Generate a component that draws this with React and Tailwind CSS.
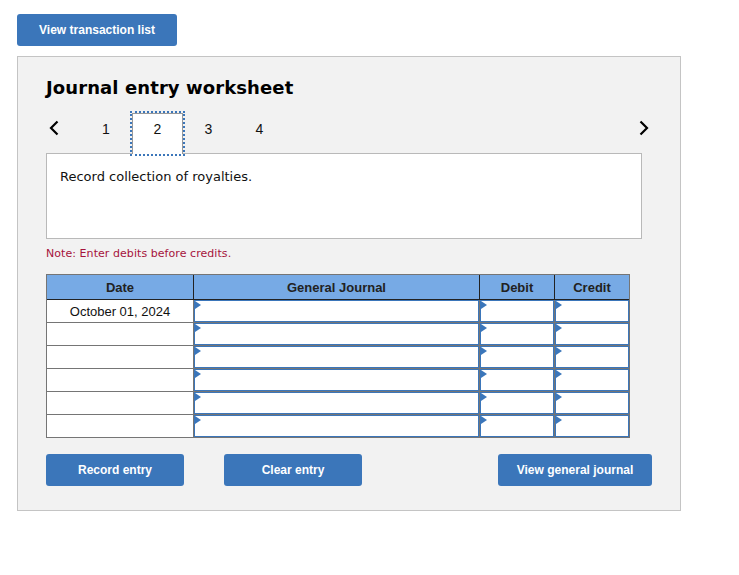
import React from 'react';

const arial = "font-['Liberation_Sans',Arial,sans-serif]";
const verdana = "font-['DejaVu_Sans',Verdana,sans-serif]";

const rows = ['October 01, 2024', '', '', '', '', ''];

function BlueButton({ label, className }) {
  return (
    <button className={`h-8 rounded-[3px] bg-[#3b76ba] text-xs font-bold text-white ${arial} ${className}`}>
      {label}
    </button>
  );
}

function Cell() {
  return (
    <div className="relative ml-[1px] border border-[#3b76ba] bg-white">
      <span className="absolute left-0 top-0 h-0 w-0 border-y-[4px] border-l-[6px] border-y-transparent border-l-[#3b76ba]" />
    </div>
  );
}

function Chevron({ right }) {
  return (
    <svg width="12" height="16" viewBox="0 0 12 16" fill="none" stroke="#000" strokeWidth="2.2">
      <path d={right ? 'M2.5 1.5L9 8l-6.5 6.5' : 'M9.5 1.5L3 8l6.5 6.5'} />
    </svg>
  );
}

export default function App() {
  return (
    <div className="min-h-[575px] w-[739px] bg-white pl-[17px] pt-[14px]">
      <BlueButton label="View transaction list" className="block w-40" />

      {/* Worksheet panel */}
      <div className="mt-[10px] h-[455px] w-[664px] border border-[#c4c4c4] bg-[#f2f2f2] pl-[28px] pt-[19px]">
        <h2 className={`text-[18px] font-bold leading-[23px] tracking-[0.1px] text-black ${verdana}`}>Journal entry worksheet</h2>

        {/* Pager */}
        <div className="relative z-10 mt-[12px] flex h-[45px] w-[604px] items-start">
          <div className="flex h-[34px] w-[35px] items-center pl-[2px]">
            <Chevron />
          </div>
          <div className={`flex h-[36px] w-[49px] items-center justify-center pl-[1px] text-sm text-[#111] ${arial}`}>1</div>
          <div className="h-[45px] w-[55px] border-2 border-dotted border-[#3b76ba]">
            <div className={`flex h-full items-center justify-center border-x border-t border-[#999] bg-white pb-[10px] text-sm text-[#111] ${arial}`}>2</div>
          </div>
          <div className={`flex h-[36px] w-[48px] items-center justify-center pr-[1px] text-sm text-[#111] ${arial}`}>3</div>
          <div className={`ml-[1px] flex h-[36px] w-[51px] items-center justify-center text-sm text-[#111] ${arial}`}>4</div>
          <div className="ml-auto flex h-[34px] items-center">
            <Chevron right />
          </div>
        </div>

        <div className={`-mt-[3px] h-[86px] w-[596px] border border-[#b9b9b9] bg-white pl-[13px] pt-[14px] text-[13px] leading-[17px] text-[#111] ${verdana}`}>
          Record collection of royalties.
        </div>

        <p className={`mt-[8px] text-[11px] leading-[14px] tracking-[0.06px] text-[#a6133c] ${verdana}`}>Note: Enter debits before credits.</p>

        {/* Journal table */}
        <div className={`mt-[13px] w-[584px] border border-[#757575] ${arial}`}>
          <div className="grid h-[25px] grid-cols-[146px_286px_75px_75px] border-b border-[#222] bg-[#77aae5] text-[13px] font-bold text-[#222]">
            <div className="flex items-center justify-center pt-[2px]">Date</div>
            <div className="flex items-center justify-center border-l border-[#222] pt-[2px]">General Journal</div>
            <div className="flex items-center justify-center border-l border-[#222] pt-[2px]">Debit</div>
            <div className="flex items-center justify-center border-l border-[#222] pt-[2px]">Credit</div>
          </div>
          {rows.map((date, i) => (
            <div key={i} className={`grid grid-cols-[146px_286px_75px_75px] bg-[#757575] ${i < 5 ? 'h-[23px] pb-[1px]' : 'h-[22px]'}`}>
              <div className="flex items-center justify-center bg-white pt-[2px] text-[13px] text-[#111]">{date}</div>
              <Cell />
              <Cell />
              <Cell />
            </div>
          ))}
        </div>

        {/* Actions */}
        <div className="mt-[16px] flex w-[606px]">
          <BlueButton label="Record entry" className="w-[138px]" />
          <BlueButton label="Clear entry" className="ml-[40px] w-[138px]" />
          <BlueButton label="View general journal" className="ml-auto w-[154px]" />
        </div>
      </div>
    </div>
  );
}
